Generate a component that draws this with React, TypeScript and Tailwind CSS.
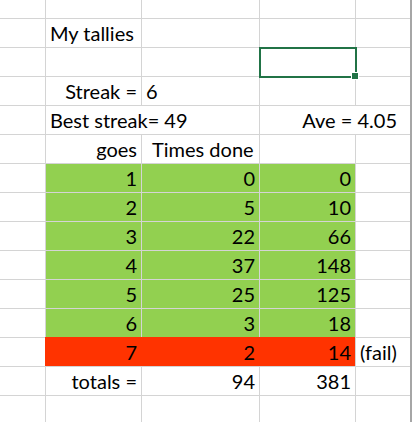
import React from "react"

const font = { fontFamily: "Lato, 'Open Sans', sans-serif" }

type Fill = "none" | "green" | "red"

const cellBase =
  "relative flex items-end whitespace-nowrap border-l border-t border-[#d4d4d4] pb-[4px] leading-[20px]"

const fillClass = (fill: Fill) => {
  if (fill === "green") return "bg-[#92d050] border-[#92d050]"
  if (fill === "red") return "bg-[#ff3300] border-[#ff3300]"
  return "bg-white"
}

const Cell = ({
  children,
  fill = "none",
  align = "left",
  className = "",
}: {
  children?: React.ReactNode
  fill?: Fill
  align?: "left" | "right"
  className?: string
}) => (
  <div
    className={`${cellBase} ${fillClass(fill)} ${
      align === "right" ? "justify-end pr-[4px]" : "justify-start pl-[4px]"
    } ${className}`}
  >
    {children}
  </div>
)

const Edge = () => <div className="bg-[#a6a6a6]" />

const rows: [number, number, number][] = [
  [1, 0, 0],
  [2, 5, 10],
  [3, 22, 66],
  [4, 37, 148],
  [5, 25, 125],
  [6, 3, 18],
]

export default function App() {
  return (
    <div
      className="h-[422px] w-[412px] overflow-hidden bg-white text-[20px] text-black"
      style={font}
    >
      <div className="grid grid-cols-[45px_96px_118px_96px_55px_2px] grid-rows-[18px_repeat(13,29px)_27px]">
        {/* row 0 (partial) */}
        <div className="bg-white" />
        <div className="border-l border-[#d4d4d4] bg-white" />
        <div className="border-l border-[#d4d4d4] bg-white" />
        <div className="border-l border-[#d4d4d4] bg-white" />
        <div className="border-l border-[#d4d4d4] bg-white" />
        <Edge />

        {/* row 1 */}
        <div className="border-t border-[#d4d4d4]" />
        <Cell>My tallies</Cell>
        <Cell />
        <Cell />
        <Cell />
        <Edge />

        {/* row 2 */}
        <div className="border-t border-[#d4d4d4]" />
        <Cell />
        <Cell />
        <Cell>
          <div className="absolute left-[-1px] top-[-1px] z-10 h-[31px] w-[98px] border-2 border-[#217346]" />
          <div className="absolute left-[92px] top-[25px] z-20 h-[6px] w-[6px] bg-[#217346] outline outline-1 outline-white" />
        </Cell>
        <Cell />
        <Edge />

        {/* row 3 */}
        <div className="border-t border-[#d4d4d4]" />
        <Cell align="right">Streak =</Cell>
        <Cell>6</Cell>
        <Cell />
        <Cell />
        <Edge />

        {/* row 4 */}
        <div className="border-t border-[#d4d4d4]" />
        <Cell className="col-span-2">Best streak= 49</Cell>
        <Cell align="right" className="col-span-2 !pr-[13px]">
          Ave = 4.05
        </Cell>
        <Edge />

        {/* row 5 */}
        <div className="border-t border-[#d4d4d4]" />
        <Cell align="right">goes</Cell>
        <Cell className="!pl-[10px]">Times done</Cell>
        <Cell />
        <Cell />
        <Edge />

        {rows.map(([g, t, s]) => (
          <React.Fragment key={g}>
            <div className="border-t border-[#d4d4d4]" />
            <Cell fill="green" align="right">
              {g}
            </Cell>
            <Cell fill="green" align="right">
              {t}
            </Cell>
            <Cell fill="green" align="right">
              {s}
            </Cell>
            <Cell />
            <Edge />
          </React.Fragment>
        ))}

        {/* row 12 */}
        <div className="border-t border-[#d4d4d4]" />
        <Cell fill="red" align="right">
          7
        </Cell>
        <Cell fill="red" align="right">
          2
        </Cell>
        <Cell fill="red" align="right">
          14
        </Cell>
        <Cell>(fail)</Cell>
        <Edge />

        {/* row 13 */}
        <div className="border-t border-[#d4d4d4]" />
        <Cell align="right">totals =</Cell>
        <Cell align="right">94</Cell>
        <Cell align="right">381</Cell>
        <Cell />
        <Edge />

        {/* row 14 (partial) */}
        <div className="border-t border-[#d4d4d4]" />
        <Cell />
        <Cell />
        <Cell />
        <Cell />
        <Edge />
      </div>
    </div>
  )
}
